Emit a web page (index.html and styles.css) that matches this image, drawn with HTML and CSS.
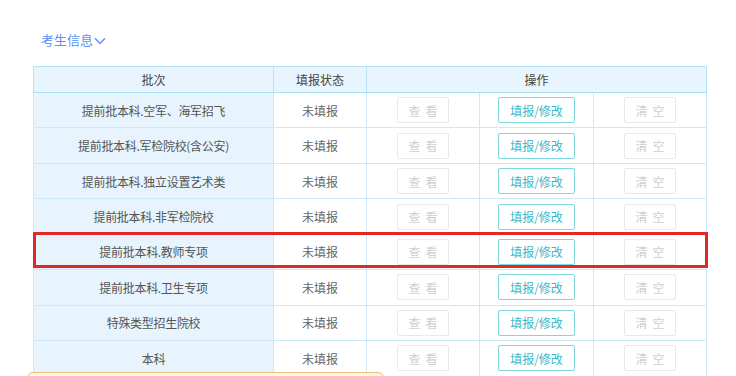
FILE: index.html
```html
<!DOCTYPE html>
<html lang="zh">
<head>
<meta charset="utf-8">
<link rel="stylesheet" href="styles.css">
</head>
<body>
<div class="page">
  <div class="title">考生信息<svg class="chev" width="12" height="8" viewBox="0 0 12 8"><path d="M1 1.2 L6 6.4 L11 1.2" fill="none" stroke="#5c8ff5" stroke-width="1.4"/></svg></div>
  <div class="table-wrap">
    <table class="grid">
      <colgroup>
        <col class="c1"><col class="c2"><col class="c3"><col class="c4"><col class="c5">
      </colgroup>
      <thead>
        <tr><th>批次</th><th>填报状态</th><th colspan="3">操作</th></tr>
      </thead>
      <tbody>
        <tr><td class="name">提前批本科.空军、海军招飞</td><td>未填报</td><td><span class="btn off">查看</span></td><td><span class="btn on">填报/修改</span></td><td><span class="btn off">清空</span></td></tr>
        <tr><td class="name">提前批本科.军检院校(含公安)</td><td>未填报</td><td><span class="btn off">查看</span></td><td><span class="btn on">填报/修改</span></td><td><span class="btn off">清空</span></td></tr>
        <tr><td class="name">提前批本科.独立设置艺术类</td><td>未填报</td><td><span class="btn off">查看</span></td><td><span class="btn on">填报/修改</span></td><td><span class="btn off">清空</span></td></tr>
        <tr><td class="name">提前批本科.非军检院校</td><td>未填报</td><td><span class="btn off">查看</span></td><td><span class="btn on">填报/修改</span></td><td><span class="btn off">清空</span></td></tr>
        <tr><td class="name">提前批本科.教师专项</td><td>未填报</td><td><span class="btn off">查看</span></td><td><span class="btn on">填报/修改</span></td><td><span class="btn off">清空</span></td></tr>
        <tr><td class="name">提前批本科.卫生专项</td><td>未填报</td><td><span class="btn off">查看</span></td><td><span class="btn on">填报/修改</span></td><td><span class="btn off">清空</span></td></tr>
        <tr><td class="name">特殊类型招生院校</td><td>未填报</td><td><span class="btn off">查看</span></td><td><span class="btn on">填报/修改</span></td><td><span class="btn off">清空</span></td></tr>
        <tr><td class="name">本科</td><td>未填报</td><td><span class="btn off">查看</span></td><td><span class="btn on">填报/修改</span></td><td><span class="btn off">清空</span></td></tr>
      </tbody>
    </table>
    <div class="highlight"></div>
  </div>
  <div class="notice"></div>
</div>
</body>
</html>
```

FILE: styles.css
```css
* { box-sizing: border-box; }
html, body { margin: 0; padding: 0; background: #fff; overflow: hidden; }
body {
  font-family: "Noto Sans CJK SC", "Noto Sans", sans-serif;
  font-size: 12px;
  color: #666;
}
.page {
  position: relative;
  width: 736px;
  height: 376px;
  overflow: hidden;
  padding: 31px 0 0 33px;
}
.title {
  display: flex;
  align-items: center;
  margin-left: 8px;
  height: 18px;
  font-size: 13px;
  color: #5c8ff5;
  line-height: 18px;
}
.chev { margin-left: 1px; margin-top: 1px; }
.table-wrap {
  position: relative;
  margin-top: 17px;
  width: 675px;
}
.grid {
  width: 673px;
  border-collapse: collapse;
  table-layout: fixed;
  border: 1px solid #a9e5ee;
}
.c1 { width: 240px; }
.c2 { width: 93px; }
.c3 { width: 113px; }
.c4 { width: 114px; }
.c5 { width: 113px; }
.grid th {
  height: 26px;
  background: #e8f5fe;
  color: #444;
  font-weight: normal;
  border: 1px solid #b5e3f3;
  border-bottom-color: #a9e0f2;
  padding: 0;
  text-align: center;
}
.grid td {
  height: 35.45px;
  border: 1px solid #cbe9f8;
  padding: 0;
  text-align: center;
  vertical-align: middle;
}
.grid td.name { background: #e7f4fd; color: #555; letter-spacing: -0.3px; }
.btn {
  display: inline-flex;
  align-items: center;
  justify-content: center;
  height: 26px;
  border-radius: 2px;
  font-size: 12px;
  vertical-align: middle;
}
.btn.off {
  width: 52px;
  border: 1px solid #e8e8e8;
  color: #cfcfcf;
  letter-spacing: 5px;
  padding-left: 5px;
}
.btn.on {
  width: 77px;
  border: 1px solid #7dd7dc;
  color: #3ab9c9;
}
.highlight {
  position: absolute;
  left: 0;
  top: 166px;
  width: 675px;
  height: 36px;
  border: 3px solid #e32626;
  pointer-events: none;
}
.notice {
  position: absolute;
  left: 27px;
  top: 372px;
  width: 357px;
  height: 20px;
  background: #fef7e2;
  border: 1px solid #eebd7d;
  border-radius: 6px;
}
```
